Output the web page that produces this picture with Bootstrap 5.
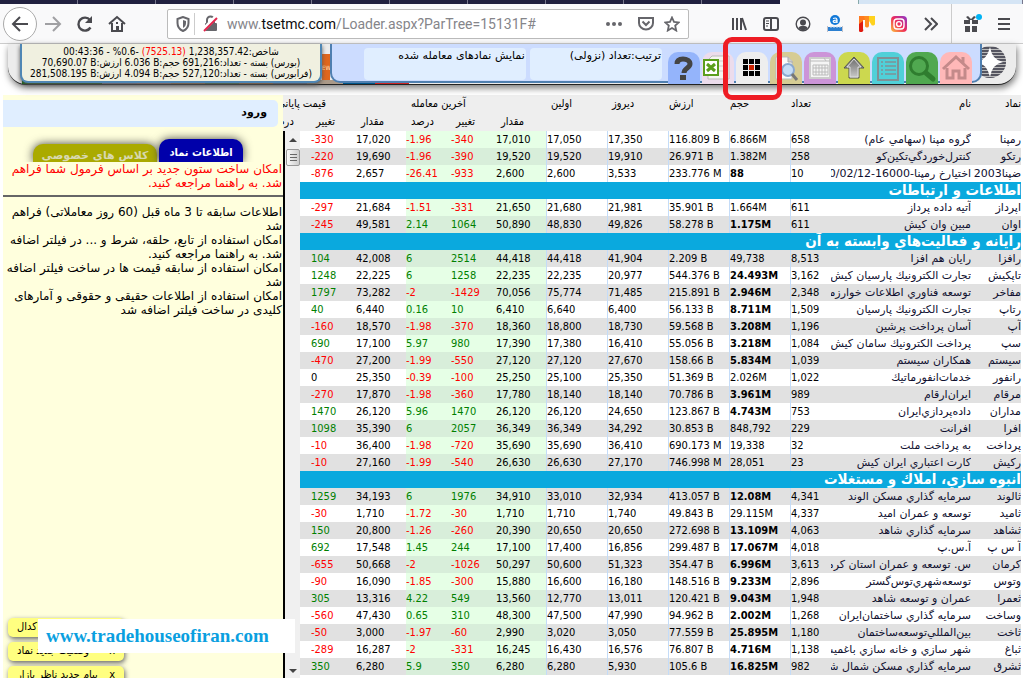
<!DOCTYPE html>
<html lang="fa">
<head>
<meta charset="utf-8">
<meta name="viewport" content="width=device-width, initial-scale=1">
<title>TSETMC</title>
<link href="https://cdn.jsdelivr.net/npm/bootstrap@5.3.0/dist/css/bootstrap.min.css" rel="stylesheet">
<style>
body{font-family:"DejaVu Sans Condensed","DejaVu Sans",sans-serif;font-size:11px;line-height:14px;color:#000;background:#fff}
button{border:0;background:none;padding:0;color:inherit;font:inherit}
a{color:inherit;text-decoration:none}
svg{display:block}
.app{height:100vh}
/* browser frame */
.tabstrip{height:4px;background:#20203f}
.tabstrip i{width:78px;border-right:1px solid #77778c}
.tabstrip .current{background:#f9f9fa;border:0}
.tabstrip .rest{background:#d5e5f5;border-left:1px solid #8aa}
.toolbar{height:40px;background:#f9f9fa;border-bottom:1px solid #ccc;padding:0 3px;color:#4a4a4f}
.tool{width:32px;height:32px;display:flex;align-items:center;justify-content:center}
.back{width:34px;height:34px;border:1px solid #aaa;border-radius:50%;background:#fff}
.urlbox{height:30px;border:1px solid #bbb;border-radius:2px;background:#fff;margin:0 34px}
.urltext{font:14px/28px Roboto,sans-serif;color:#85858a}
.urltext b{font-weight:400;color:#0c0c0d}
.sep{width:1px;height:22px;background:#ccc}
/* site header */
.masthead{height:41px;margin:0 7px 10px 8px;background:#ececec;border-bottom:1px solid #222;border-radius:0 0 18px 18px;box-shadow:1px 3px 7px #777}
.strip{height:4px;left:14px;right:24px;bottom:0}
.stats{width:302px;height:39px;margin-left:12px;background:#f0f0e0;border:2px solid #4f86b4;border-top:0;border-radius:0 0 8px 8px;font-size:10px;line-height:11px;padding-top:2px;box-shadow:0 2px 4px #555}
.neg{color:red}
.fresh{width:8px;height:28px;margin-top:10px;background:#e0661c;color:#ffe0c0;font-size:6px;line-height:28px;overflow:hidden}
.panel{height:39px;background:#ccdcff;border:2px solid #4f7fb0;border-top:0;border-radius:0 0 10px 10px;padding:4px 8px 0 32px}
.opt{height:32px;background:#e0eeff;border-radius:4px;padding:1px;text-align:right;font-family:"DejaVu Sans",sans-serif}
.icontab{width:32px;height:32px;border-radius:10px 10px 0 0;margin-left:2px;overflow:hidden}
.hilite{left:723px;top:37px;width:59px;height:63px;border:5px solid #ee1c24;border-radius:9px;z-index:5}
/* side column */
.side{width:280px;margin-left:3px;background:#ffffdd;font-family:"DejaVu Sans",sans-serif}
.login{width:275px;height:27px;margin-top:5px;background:#e0eeff;border-radius:0 5px 5px 0;padding:6px 11px;font-weight:700;text-align:right}
.tabs{height:35px;overflow:hidden;padding:12px 40px 0 30px}
.tabs button{border-radius:10px 10px 0 0;box-shadow:0 0 10px #444;font-weight:700;line-height:16px;padding-top:4px;white-space:nowrap}
.tabs .tab-a{width:84px;background:#0000aa;color:#fff;font-family:"DejaVu Sans Condensed",sans-serif}
.tabs .tab-b{width:124px;margin:5px 2px 0 0;background:#aaaa00;color:#d8d8b0;overflow:hidden}
.note{font-size:12px;line-height:14px;padding-right:1px;white-space:nowrap}
.rule{height:2px;margin:5px 0 8px;background:#666}
.chip{width:116px;height:19px;background:#ffff80;border-radius:5px;box-shadow:1px 2px 5px #666;margin-bottom:5px;padding:2px 9px;white-space:nowrap}
.chips{left:8px;top:618px}
.watermark{left:38px;top:619px;width:257px;height:34px;background:#fff;color:#0a9fe0;font:bold 19px/34px "Liberation Serif",serif;padding-left:8px}
/* quotes */
.heads{background:#eee;height:36px}
.rail{width:17px;background:#f0f0f0;border-left:2px solid #000}
.thumb{width:14px;height:17px;border:1px solid #999;border-radius:2px;background:linear-gradient(90deg,#fafafa,#ccc)}
.quotes{table-layout:fixed;min-width:755px;border-collapse:separate;border-spacing:0}
.quotes .w50{width:50px}
.quotes .w41{width:41px}
.quotes .w61{width:61px}
.quotes .w45{width:45px}
.heads .quotes{width:calc(100% + 17px)}
.rows .quotes{width:calc(100% + 34px)}
.quotes th,.quotes td{padding:0;height:17px;line-height:17px;white-space:nowrap;overflow:hidden;text-align:left;direction:ltr;font-weight:400}
.heads .quotes th{height:18px;line-height:16px;direction:rtl;padding-left:5px}
.heads .quotes th.flush{padding-left:1px}
.heads .quotes th.right{text-align:right;padding:0}
.heads .quotes th.closing{text-align:right;padding-right:80px}
.rows tr.alt{background:#e1e1e1}
.rows th[scope=row],.rows td:nth-child(2){text-align:right;direction:rtl;color:#101030;font-family:"DejaVu Sans",sans-serif}
.rows td:nth-child(n+3):nth-child(-n+7){border-left:1px solid #c4dcf8}
.rows td:nth-child(n+8):nth-child(-n+10){background:#e6ffe6}
.rows .alt td:nth-child(n+8):nth-child(-n+10){background:#d8eeda}
.rows td.up{color:#008000}
.rows td.dn{color:#f00}
.rows th.sector{background:#0aa9de;color:#fff;font-size:15px;font-weight:700;text-align:right;direction:rtl}
</style>
</head>
<body>
<div class="app d-flex flex-column overflow-hidden position-relative">
<div class="tabstrip d-flex flex-shrink-0"><i></i><i></i><i></i><i></i><i></i><i></i><i></i><i></i><i></i><i class="border-0"></i><i class="current"></i><i class="rest flex-fill"></i></div>
<nav class="toolbar d-flex align-items-center flex-shrink-0" aria-label="Browser">
<button class="tool back" aria-label="Back"><svg width="18" height="16" fill="none" stroke="currentColor" stroke-width="2"><path d="M17 8H2M9 1L2 8l7 7"/></svg></button>
<button class="tool opacity-50" aria-label="Forward"><svg width="18" height="16" fill="none" stroke="currentColor" stroke-width="2"><path d="M1 8h15M9 1l7 7-7 7"/></svg></button>
<button class="tool" aria-label="Reload"><svg width="18" height="18" fill="none" stroke="currentColor" stroke-width="2.4"><path d="M14.500 12.500A6.500 6.500 0 1 1 14 5"/><path d="M16 1v7H9z" fill="currentColor" stroke="none"/></svg></button>
<button class="tool" aria-label="Home"><svg width="18" height="17" fill="none" stroke="currentColor" stroke-width="2"><path d="M1 9l8-7 8 7M4 8v8h10V8"/><path d="M8 11h3v5H8zM8 7h2v2H8z" fill="currentColor" stroke="none"/></svg></button>
<div class="urlbox d-flex align-items-center flex-fill px-2">
<svg width="14" height="16" fill="none" stroke="#66666b" stroke-width="2"><path d="M7 1L1.500 3v4c0 4 2 6.500 5.500 8 3.500-1.500 5.500-4 5.500-8V3z"/><path d="M7 4v8c2-1 3-3 3-5V5z" fill="#66666b" stroke="none"/></svg>
<span class="sep ms-1 me-2"></span>
<svg width="16" height="18"><path d="M4 8V5a3.500 3.500 0 0 1 7 0v3" fill="none" stroke="#66666b" stroke-width="2"/><rect x="2" y="8" width="12" height="8" rx="1" fill="#66666b"/><path d="M0 15L13 2" stroke="#fff" stroke-width="4"/><path d="M1 16L14 3" stroke="#e2264d" stroke-width="2"/></svg>
<span class="urltext ms-2">www.<b>tsetmc.com</b>/Loader.aspx?ParTree=15131F#</span>
<span class="ms-auto d-flex align-items-center gap-3">
<svg width="16" height="6" fill="#66666b"><circle cx="2" cy="3" r="2"/><circle cx="8" cy="3" r="2"/><circle cx="14" cy="3" r="2"/></svg>
<span class="d-flex gap-2"><svg width="18" height="15" fill="none" stroke="#66666b" stroke-width="2"><path d="M1 2h14v5a7 6.500 0 0 1-14 0z"/><path d="M4.500 5.500L8 9l3.500-3.500"/></svg>
<svg width="16" height="16" fill="none" stroke="#66666b" stroke-width="1.800"><path d="M8 1.500l2 4.400 4.700.5-3.500 3.200 1 4.900L8 12l-4.200 2.500 1-4.900L1.300 6.400 6 5.900z"/></svg></span>
</span>
</div>
<button class="tool" aria-label="Library"><svg width="16" height="16" stroke="currentColor" stroke-width="2"><path d="M2 2v12M6 2v12M10 2v12M11 2l4 12"/></svg></button>
<button class="tool" aria-label="Sidebars"><svg width="16" height="14" fill="none" stroke="currentColor" stroke-width="2"><rect x="1" y="1" width="14" height="12" rx="2"/><path d="M8 1v12"/><path d="M3 4h3M3 6.500h3M3 9h2" stroke-width="1"/></svg></button>
<button class="tool" aria-label="Account"><svg width="16" height="16"><circle cx="8" cy="8" r="6.800" fill="none" stroke="currentColor" stroke-width="1.400"/><circle cx="8" cy="6.500" r="3" fill="currentColor"/><path d="M3.500 12c1-3 8-3 9 0-2 3-7 3-9 0" fill="currentColor"/></svg></button>
<button class="tool" aria-label="Alexa"><svg width="16" height="17"><circle cx="8" cy="5" r="5" fill="#1279d8"/><path d="M6 3.500c3-1.200 4 0 4 1.500v3M10 5C4 5 6 9 10 6.500" fill="none" stroke="#fff" stroke-width="1.200"/><path d="M0 11v6M16 11v6" stroke="#889"/><path d="M1 12h14v4H1z" fill="#2b7fd0"/><path d="M4 11v2M7 11v2M10 11v2M13 11v2" stroke="#cde"/></svg></button>
<button class="tool" aria-label="Mouseflow"><svg width="16" height="16"><path d="M0 0h10v4H4v4H0z" fill="#ff7a1f"/><path d="M0 8l4-3v8a2 2 0 0 1-4 2z" fill="#e01b10"/><path d="M5 0h5v10a2 2 0 0 1-4-1V4z" fill="#ff8c1f"/><path d="M10 0h6v7a2 2 0 0 1-4 1l-2-3z" fill="#ffd21d"/></svg></button>
<button class="tool" aria-label="Instagram"><svg width="16" height="16"><defs><linearGradient id="ig" x1="0" y1="1" x2="1" y2="0"><stop stop-color="#fdc13d"/><stop offset=".5" stop-color="#ee2a5b"/><stop offset="1" stop-color="#8a3ad0"/></linearGradient></defs><rect width="16" height="16" rx="4" fill="url(#ig)"/><g fill="none" stroke="#fff" stroke-width="1.400"><rect x="3" y="3" width="10" height="10" rx="3"/><circle cx="8" cy="8" r="2.400"/></g></svg></button>
<button class="tool" aria-label="More tools"><svg width="14" height="14" fill="none" stroke="currentColor" stroke-width="2"><path d="M1 1l6 6-6 6M7 1l6 6-6 6"/></svg></button>
<span class="sep h-100 mx-1"></span>
<button class="tool" aria-label="What's new"><svg width="20" height="20"><path d="M2 6h5L4 3l2-1 3 3 3-3 2 1-3 3h5v4h-6V6H8v4H2zM3 12h5v6H3zM10 12h5v6h-5z" fill="currentColor"/><circle cx="17" cy="3" r="3" fill="#00b3f4"/></svg></button>
<button class="tool" aria-label="Menu"><svg width="12" height="13" stroke="currentColor" stroke-width="2"><path d="M0 2h12M0 7h12M0 12h12"/></svg></button>
</nav>

<header class="masthead d-flex flex-shrink-0 position-relative">
<div class="strip position-absolute d-flex" aria-hidden="true"><i style="width:80px;background:#060"></i><i style="width:35px;background:#99b"></i><i style="width:34px;background:#c99"></i><i style="width:34px;background:#c84"></i><i style="width:34px;background:#484"></i><i style="width:34px;background:#c73"></i><i style="width:34px;background:#57a"></i><i style="width:36px;background:#a98"></i><i style="width:32px;background:#058"></i><i style="width:34px;background:#c22"></i></div>
<div class="stats position-relative text-center flex-shrink-0" dir="rtl">
<div>شاخص:1,238,357.42 <span class="neg" dir="ltr">(7525.13)</span> -0.6% - 00:43:36</div>
<div>(بورس) بسته - تعداد:691,216 حجم:<bdi>6.036 B</bdi> ارزش:<bdi>70,690.07 B</bdi></div>
<div>(فرابورس) بسته - تعداد:527,120 حجم:<bdi>4.094 B</bdi> ارزش:<bdi>281,508.195 B</bdi></div>
</div>
<div class="fresh">EW</div>
<div class="panel position-relative d-flex flex-fill">
<div class="opt" dir="rtl" style="flex:162">نمایش نمادهای معامله شده</div>
<div class="opt ms-1" dir="rtl" style="flex:132">ترتیب:تعداد (نزولی)</div>
<div class="d-flex pt-1 ps-1">
<button class="icontab" style="background:#94b4fb" aria-label="راهنما"><svg width="32" height="32"><path d="M9 12c0-4 3-5 6-5 4 0 7 2 7 5 0 4-6 4-6 9" fill="none" stroke="#444" stroke-width="5"/><rect x="12" y="23" width="6" height="5" fill="#444"/></svg></button>
<button class="icontab" style="background:#ecdcec" aria-label="اکسل"><svg width="32" height="32"><path d="M10 4h17v23H6V8z" fill="#f4f4f0" stroke="#bbb"/><path d="M14 9h10M14 14h10M14 19h10" stroke="#ccc"/><rect x="2" y="8" width="14" height="15" fill="#fff" stroke="#5a9e1c" stroke-width="2"/><path d="M5 12l8 7M13 12l-8 7" stroke="#5a9e1c" stroke-width="3"/></svg></button>
<button class="icontab" style="background:#eee" aria-label="نقشه بازار"><svg width="32" height="32"><path d="M7 7h5v5H7zm6 0h5v5h-5zm6 0h5v5h-5zM7 13h5v5H7zm12 0h5v5h-5zM7 19h5v5H7zm6 0h5v5h-5zm6 0h5v5h-5z"/><path d="M13 13h5v5h-5z" fill="#c20"/></svg></button>
<button class="icontab" style="background:#d6cc94" aria-label="فیلتر"><svg width="32" height="32"><path d="M6 5h12l4 4v18H6z" fill="#fafafa" stroke="#bbb"/><path d="M18 5v5h5" fill="#ccc" stroke="#aaa"/><circle cx="18" cy="18" r="6" fill="#c5dcf7" stroke="#8aa8d0" stroke-width="2"/><path d="M22 22l5 6" stroke="#777" stroke-width="3"/></svg></button>
<button class="icontab" style="background:#cc94d8" aria-label="تقویم"><svg width="32" height="32"><path d="M6 6h20v20H6z" fill="#f5f5f5" stroke="#ccc" stroke-width="2"/><path d="M6 9h20M20 6l2 3" stroke="#bbb"/><path d="M9 13h15v10H9zM9 16h15M9 20h15M12 13v10M15 13v10M18 13v10M21 13v10" fill="none" stroke="#bbb"/></svg></button>
<button class="icontab" style="background:#ccd84f" aria-label="بالا"><svg width="32" height="32"><defs><linearGradient id="ar" x1="0" y1="0" x2="0" y2="1"><stop stop-color="#666"/><stop offset="1" stop-color="#ccc"/></linearGradient></defs><path d="M16 5L6 16h5v10h10V16h5z" fill="url(#ar)" stroke="#555"/><path d="M16 7l-7 8h3v10h8V15h3z" fill="none" stroke="#ddd"/></svg></button>
<button class="icontab" style="background:#50d0d8" aria-label="فهرست"><svg width="32" height="32" fill="none" stroke="#7f9196" stroke-width="2"><rect x="6" y="6" width="20" height="22"/><path d="M9 10h2M9 14h2M9 18h2M9 22h2M13 10h11M13 14h11M13 18h11M13 22h11" stroke-width="1.500"/></svg></button>
<button class="icontab" style="background:#50a850" aria-label="جستجو"><svg width="32" height="32" fill="none" stroke="#2f7d2f"><circle cx="13" cy="14" r="8.500" stroke-width="3"/><path d="M20 21l7 6" stroke-width="5" stroke-linecap="round"/></svg></button>
<button class="icontab" style="background:#ffb8b8" aria-label="خانه"><svg width="32" height="32" fill="none" stroke="#c48a8a" stroke-width="3"><path d="M3 17L16 5l13 12M23 5v6"/><path d="M7 16v10h6v-7h6v7h6V16"/></svg></button>
</div>
</div>
<svg class="flex-shrink-0" style="margin-left:-8px;margin-right:10px" width="32" height="38"><defs><pattern id="ln" width="4" height="3" patternUnits="userSpaceOnUse"><path d="M0 0h4v2H0z" fill="#555560"/></pattern></defs><circle cx="16" cy="18" r="16" fill="#bbb"/><circle cx="16" cy="18" r="16" fill="url(#ln)"/><path d="M16 3q2 13 13 15-11 2-13 15-3-13-13-15Q13 16 16 3" fill="#fff"/></svg>
</header>
<div class="hilite position-absolute" aria-hidden="true"></div>

<main class="d-flex flex-fill overflow-hidden" style="margin-right:2px">
<aside class="side flex-shrink-0">
<div class="login" dir="rtl"><a href="#">ورود</a></div>
<div class="tabs d-flex align-items-stretch justify-content-end" dir="ltr">
<button class="tab-b" dir="rtl">کلاس های خصوصی</button>
<button class="tab-a" dir="rtl">اطلاعات نماد</button>
</div>
<div class="note neg" dir="rtl">امکان ساخت ستون جدید بر اساس فرمول شما فراهم<br>شد. به راهنما مراجعه کنید.</div>
<div class="rule"></div>
<div class="note" dir="rtl">اطلاعات سابقه تا 3 ماه قبل (60 روز معاملاتی) فراهم<br>شد<br>امکان استفاده از تابع، حلقه، شرط و ... در فیلتر اضافه<br>شد. به راهنما مراجعه کنید.<br>امکان استفاده از سابقه قیمت ها در ساخت فیلتر اضافه<br>شد<br>امکان استفاده از اطلاعات حقیقی و حقوقی و آمارهای<br>کلیدی در ساخت فیلتر اضافه شد</div>
</aside>
<section class="d-flex flex-column flex-fill overflow-hidden" dir="rtl">
<div class="heads overflow-hidden flex-shrink-0">
<table class="quotes">
<colgroup><col class="w50"><col><col class="w41"><col class="w61" span="4"><col class="w50"><col class="w45" span="2"><col class="w50"><col class="w45" span="2"></colgroup>
<tr><th class="right">نماد<th class="right">نام<th class="flush">تعداد<th class="flush">حجم<th class="flush">ارزش<th>دیروز<th>اولین<th colspan="3">آخرین معامله<th colspan="3" class="closing">قیمت پایانی</tr>
<tr><th><th><th><th><th><th><th><th>مقدار<th>تغییر<th>درصد<th>مقدار<th>تغییر<th>درصد</tr>
</table>
</div>
<div class="rows d-flex flex-fill overflow-hidden">
<div class="flex-fill overflow-hidden">
<table class="quotes">
<colgroup><col class="w50"><col><col class="w41"><col class="w61" span="4"><col class="w50"><col class="w45" span="2"><col class="w50"><col class="w45" span="2"></colgroup>
<tbody>
<tr><th scope="row">رمپنا<td>گروه مپنا (سهامي عام)<td>658<td>6.866M<td>116.809 B<td>17,350<td>17,050<td>17,010<td class="dn">-340<td class="dn">-1.96<td>17,020<td class="dn">-330<td></tr>
<tr class="alt"><th scope="row">رتكو<td>كنترل‌خوردگي‌تكين‌كو<td>258<td>1.382M<td>26.971 B<td>19,910<td>19,520<td>19,520<td class="dn">-390<td class="dn">-1.96<td>19,690<td class="dn">-220<td></tr>
<tr><th scope="row">ضپنا2003<td>اختيارخ رمپنا-16000-1400/02/12<td>10<td><b>88</b><td>233.776 M<td>3,533<td>2,600<td>2,600<td class="dn">-933<td class="dn">-26.41<td>2,657<td class="dn">-876<td></tr>
<tr><th class="sector" colspan="13">اطلاعات و ارتباطات</tr>
<tr><th scope="row">اپرداز<td>آتيه داده پرداز<td>611<td>1.664M<td>35.901 B<td>21,981<td>21,680<td>21,650<td class="dn">-331<td class="dn">-1.51<td>21,684<td class="dn">-297<td></tr>
<tr class="alt"><th scope="row">اوان<td>مبين وان كيش<td>611<td><b>1.175M</b><td>58.278 B<td>49,826<td>48,830<td>50,890<td class="up">1064<td class="up">2.14<td>49,581<td class="dn">-245<td></tr>
<tr><th class="sector" colspan="13">رايانه و فعاليت‌هاي وابسته به آن</tr>
<tr class="alt"><th scope="row">رافزا<td>رايان هم افزا<td>8,513<td>49,738<td>2.209 B<td>41,904<td>44,418<td>44,418<td class="up">2514<td class="up">6<td>42,008<td class="up">104<td></tr>
<tr><th scope="row">تاپكيش<td>تجارت الكترونيك پارسيان كيش<td>3,162<td><b>24.493M</b><td>544.376 B<td>20,977<td>22,235<td>22,235<td class="up">1258<td class="up">6<td>22,225<td class="up">1248<td></tr>
<tr class="alt"><th scope="row">مفاخر<td>توسعه فناوري اطلاعات خوارزمي<td>2,348<td><b>2.946M</b><td>215.891 B<td>71,485<td>75,774<td>70,056<td class="dn">-1429<td class="dn">-2<td>73,282<td class="up">1797<td></tr>
<tr><th scope="row">رتاپ<td>تجارت الكترونيك پارسيان<td>1,509<td><b>8.711M</b><td>56.133 B<td>6,400<td>6,640<td>6,410<td class="up">10<td class="up">0.16<td>6,440<td class="up">40<td></tr>
<tr class="alt"><th scope="row">آپ<td>آسان پرداخت پرشين<td>1,196<td><b>3.208M</b><td>59.568 B<td>18,730<td>18,800<td>18,360<td class="dn">-370<td class="dn">-1.98<td>18,570<td class="dn">-160<td></tr>
<tr><th scope="row">سپ<td>پرداخت الكترونيك سامان كيش<td>1,084<td><b>3.218M</b><td>55.056 B<td>16,410<td>17,380<td>17,390<td class="up">980<td class="up">5.97<td>17,100<td class="up">690<td></tr>
<tr class="alt"><th scope="row">سيستم<td>همكاران سيستم<td>1,039<td><b>5.834M</b><td>158.66 B<td>27,670<td>27,120<td>27,120<td class="dn">-550<td class="dn">-1.99<td>27,200<td class="dn">-470<td></tr>
<tr><th scope="row">رانفور<td>خدمات‌انفورماتيك<td>1,022<td>2.026M<td>51.369 B<td>25,350<td>25,100<td>25,250<td class="dn">-100<td class="dn">-0.39<td>25,350<td>0<td></tr>
<tr class="alt"><th scope="row">مرقام<td>ايران‌ارقام<td>989<td><b>3.961M</b><td>70.786 B<td>18,140<td>18,140<td>17,780<td class="dn">-360<td class="dn">-1.98<td>17,870<td class="dn">-270<td></tr>
<tr><th scope="row">مداران<td>داده‌پردازي‌ايران<td>753<td><b>4.743M</b><td>123.867 B<td>24,650<td>26,120<td>26,120<td class="up">1470<td class="up">5.96<td>26,120<td class="up">1470<td></tr>
<tr class="alt"><th scope="row">افرا<td>افرانت<td>229<td>848,792<td>30.853 B<td>34,292<td>36,349<td>36,349<td class="up">2057<td class="up">6<td>35,390<td class="up">1098<td></tr>
<tr><th scope="row">پرداخت<td>به پرداخت ملت<td>32<td>19,338<td>690.173 M<td>36,410<td>35,690<td>35,690<td class="dn">-720<td class="dn">-1.98<td>36,400<td class="dn">-10<td></tr>
<tr class="alt"><th scope="row">ركيش<td>كارت اعتباري ايران كيش<td>23<td>28,051<td>746.998 M<td>27,170<td>26,630<td>26,630<td class="dn">-540<td class="dn">-1.99<td>27,160<td class="dn">-10<td></tr>
<tr><th class="sector" colspan="13">انبوه سازي، املاك و مستغلات</tr>
<tr class="alt"><th scope="row">ثالوند<td>سرمايه گذاري مسكن الوند<td>4,341<td><b>12.08M</b><td>413.057 B<td>32,934<td>33,010<td>34,910<td class="up">1976<td class="up">6<td>34,193<td class="up">1259<td></tr>
<tr><th scope="row">ثاميد<td>توسعه و عمران اميد<td>4,337<td>29.115M<td>49.843 B<td>1,740<td>1,710<td>1,710<td class="dn">-30<td class="dn">-1.72<td>1,710<td class="dn">-30<td></tr>
<tr class="alt"><th scope="row">ثشاهد<td>سرمايه گذاري شاهد<td>4,063<td><b>13.109M</b><td>272.698 B<td>20,650<td>20,650<td>20,390<td class="dn">-260<td class="dn">-1.26<td>20,800<td class="up">150<td></tr>
<tr><th scope="row">آ س پ<td>آ.س.پ<td>4,018<td><b>17.067M</b><td>299.487 B<td>16,856<td>17,400<td>17,100<td class="up">244<td class="up">1.45<td>17,548<td class="up">692<td></tr>
<tr class="alt"><th scope="row">كرمان<td>س. توسعه و عمران استان كرمان<td>3,613<td><b>6.996M</b><td>354.47 B<td>51,323<td>50,600<td>50,297<td class="dn">-1026<td class="dn">-2<td>50,668<td class="dn">-655<td></tr>
<tr><th scope="row">وتوس<td>توسعه‌شهري‌توس‌گستر<td>2,896<td><b>9.233M</b><td>148.516 B<td>16,180<td>16,600<td>15,880<td class="dn">-300<td class="dn">-1.85<td>16,090<td class="dn">-90<td></tr>
<tr class="alt"><th scope="row">ثعمرا<td>عمران و توسعه شاهد<td>1,948<td><b>9.043M</b><td>120.421 B<td>13,011<td>12,770<td>13,560<td class="up">549<td class="up">4.22<td>13,316<td class="up">305<td></tr>
<tr><th scope="row">وساخت<td>سرمايه گذاري ساختمان‌ايران<td>1,268<td><b>2.002M</b><td>94.962 B<td>47,990<td>47,500<td>48,300<td class="up">310<td class="up">0.65<td>47,430<td class="dn">-560<td></tr>
<tr class="alt"><th scope="row">ثاخت<td>بين‌المللي‌توسعه‌ساختمان<td>1,180<td><b>25.895M</b><td>77.559 B<td>3,050<td>3,020<td>2,990<td class="dn">-60<td class="dn">-1.97<td>3,000<td class="dn">-50<td></tr>
<tr><th scope="row">ثباغ<td>شهر سازي و خانه سازي باغميشه<td>1,138<td><b>4.716M</b><td>76.807 B<td>16,576<td>16,430<td>16,245<td class="dn">-331<td class="dn">-2<td>16,287<td class="dn">-289<td></tr>
<tr class="alt"><th scope="row">ثشرق<td>سرمايه گذاري مسكن شمال شرق<td>982<td><b>16.825M</b><td>105.6 B<td>5,930<td>6,280<td>6,280<td class="up">350<td class="up">5.9<td>6,280<td class="up">350<td></tr>
</tbody>
</table>
</div>
<div class="rail d-flex flex-column align-items-center flex-shrink-0" dir="ltr" aria-hidden="true">
<svg width="14" height="18"><path d="M3 11l4-4 4 4z" fill="#444"/></svg>
<div class="thumb"><svg width="12" height="15" stroke="#666"><path d="M3 4.500h7M3 7.500h7M3 10.500h7"/></svg></div>
<svg class="mt-auto" width="14" height="14"><path d="M3 5l4 4 4-4z" fill="#444"/></svg>
</div>
</div>
</section>
</main>
<div class="chips position-absolute" dir="rtl">
<div class="chip d-flex justify-content-end">کدال</div>
<div class="chip d-flex justify-content-between"><span>x</span><span>وضعیت جدید نماد</span></div>
<div class="chip d-flex justify-content-between"><span>x</span><span>پیام جدید ناظر بازار</span></div>
</div>
<a class="watermark position-absolute" href="#">www.tradehouseofiran.com</a>
</div>
<script src="https://cdn.jsdelivr.net/npm/bootstrap@5.3.0/dist/js/bootstrap.bundle.min.js"></script>
</body>
</html>
